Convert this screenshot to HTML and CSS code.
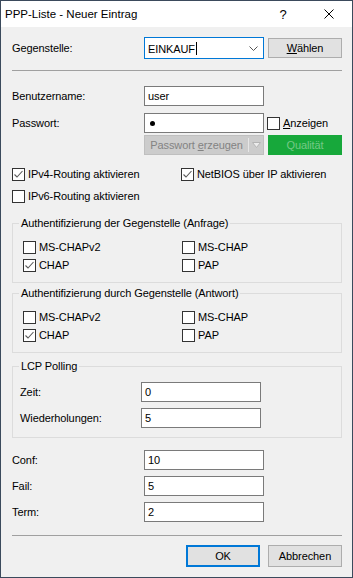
FILE: index.html
```html
<!DOCTYPE html>
<html lang="de">
    <head>
        <meta charset="UTF-8" />
        <meta name="viewport" content="width=device-width, initial-scale=1.0"/>
        <title>PPP-Liste - Neuer Eintrag</title>
        <link rel="stylesheet" href="styles.css">
    </head>
    <body>
        <div class="window">
            <div class="titlebar">
                <span class="title">PPP-Liste - Neuer Eintrag</span>
                <span class="tb-btn help">?</span>
                <span class="tb-btn">
                    <svg width="10" height="10" viewBox="0 0 10 10"><path d="M0.5 0.5 L9.5 9.5 M9.5 0.5 L0.5 9.5" stroke="#000" stroke-width="1" fill="none"/></svg>
                </span>
            </div>

            <div class="content">
                <div class="row r-remote">
                    <span class="lbl">Gegenstelle:</span>
                    <div class="combo">
                        <span class="combo-text">EINKAUF<span class="caret"></span></span>
                        <svg class="chev" width="9" height="5" viewBox="0 0 9 5"><polyline points="0.5,0.5 4.5,4.5 8.5,0.5" stroke="#555" stroke-width="1" fill="none"/></svg>
                    </div>
                    <button class="btn side"><u>W</u>ählen</button>
                </div>

                <div class="sep sep-top"></div>

                <div class="row r-user">
                    <span class="lbl">Benutzername:</span>
                    <div class="field">user</div>
                </div>
                <div class="row r-pass">
                    <span class="lbl">Passwort:</span>
                    <div class="field"><span class="dot"></span></div>
                    <label class="check side-check"><span class="cb"></span><span><u>A</u>nzeigen</span></label>
                </div>
                <div class="row r-gen">
                    <span class="lbl"></span>
                    <div class="split">
                        <span class="split-main">Passwort <u>e</u>rzeugen</span>
                        <span class="split-arrow">
                            <svg width="9" height="6" viewBox="0 0 9 6"><polygon points="0.5,0.5 8.5,0.5 4.5,5.5" fill="#ececec" stroke="#b4b4b4" stroke-width="1"/></svg>
                        </span>
                    </div>
                    <button class="btn quality">Qualität</button>
                </div>

                <div class="checks r-ipv4">
                    <label class="check"><span class="cb on"><svg width="11" height="11" viewBox="0 0 11 11"><polyline points="1.5,5.5 4,8 9.5,2" stroke="#5a5a5a" stroke-width="1.1" fill="none"/></svg></span><span>IPv4-Routing aktivieren</span></label>
                    <label class="check"><span class="cb on"><svg width="11" height="11" viewBox="0 0 11 11"><polyline points="1.5,5.5 4,8 9.5,2" stroke="#5a5a5a" stroke-width="1.1" fill="none"/></svg></span><span>NetBIOS über IP aktivieren</span></label>
                </div>
                <div class="checks r-ipv6">
                    <label class="check"><span class="cb"></span><span>IPv6-Routing aktivieren</span></label>
                </div>

                <fieldset class="group grp-first">
                    <legend>Authentifizierung der Gegenstelle (Anfrage)</legend>
                    <div class="gchecks">
                        <label class="check"><span class="cb"></span><span>MS-CHAPv2</span></label>
                        <label class="check"><span class="cb"></span><span>MS-CHAP</span></label>
                    </div>
                    <div class="gchecks second">
                        <label class="check"><span class="cb on"><svg width="11" height="11" viewBox="0 0 11 11"><polyline points="1.5,5.5 4,8 9.5,2" stroke="#5a5a5a" stroke-width="1.1" fill="none"/></svg></span><span>CHAP</span></label>
                        <label class="check"><span class="cb"></span><span>PAP</span></label>
                    </div>
                </fieldset>

                <fieldset class="group grp-answer">
                    <legend>Authentifizierung durch Gegenstelle (Antwort)</legend>
                    <div class="gchecks">
                        <label class="check"><span class="cb"></span><span>MS-CHAPv2</span></label>
                        <label class="check"><span class="cb"></span><span>MS-CHAP</span></label>
                    </div>
                    <div class="gchecks second">
                        <label class="check"><span class="cb on"><svg width="11" height="11" viewBox="0 0 11 11"><polyline points="1.5,5.5 4,8 9.5,2" stroke="#5a5a5a" stroke-width="1.1" fill="none"/></svg></span><span>CHAP</span></label>
                        <label class="check"><span class="cb"></span><span>PAP</span></label>
                    </div>
                </fieldset>

                <fieldset class="group grp-lcp">
                    <legend>LCP Polling</legend>
                    <div class="row g-time">
                        <span class="glbl">Zeit:</span>
                        <div class="field">0</div>
                    </div>
                    <div class="row g-repeat">
                        <span class="glbl">Wiederholungen:</span>
                        <div class="field">5</div>
                    </div>
                </fieldset>

                <div class="row r-conf">
                    <span class="lbl">Conf:</span>
                    <div class="field">10</div>
                </div>
                <div class="row r-next">
                    <span class="lbl">Fail:</span>
                    <div class="field">5</div>
                </div>
                <div class="row r-next">
                    <span class="lbl">Term:</span>
                    <div class="field">2</div>
                </div>

                <div class="sep sep-bottom"></div>

                <div class="actions">
                    <button class="btn default">OK</button>
                    <button class="btn">Abbrechen</button>
                </div>
            </div>
        </div>
    </body>
</html>
```

FILE: styles.css
```css
* {
    margin: 0;
    padding: 0;
    box-sizing: border-box;
}

body {
    background: #f0f0f0;
    font-family: "Liberation Sans", Arial, sans-serif;
    font-size: 11px;
    letter-spacing: -0.1px;
    color: #000;
}

.window {
    width: 353px;
    height: 578px;
    border: 1px solid #3b4a5c;
    background: #f0f0f0;
}

/* title bar */
.titlebar {
    height: 26px;
    background: #fff;
    display: flex;
    align-items: center;
}

.title {
    flex: 1;
    padding-left: 4px;
    font-size: 11.5px;
    letter-spacing: 0;
}

.tb-btn {
    width: 46px;
    height: 26px;
    display: flex;
    align-items: center;
    justify-content: center;
}

.help {
    font-size: 13px;
}

/* content */
.content {
    padding: 0 10px 0 11px;
}

.row {
    display: flex;
    align-items: center;
}

.lbl {
    width: 132px;
    flex: none;
}

.field {
    width: 120px;
    height: 20px;
    flex: none;
    border: 1px solid #7a7a7a;
    background: #fff;
    padding-left: 3px;
    display: flex;
    align-items: center;
}

.combo {
    width: 120px;
    height: 22px;
    flex: none;
    border: 1px solid #0078d7;
    background: #fff;
    padding: 0 5px 0 3px;
    display: flex;
    align-items: center;
    justify-content: space-between;
}

.caret {
    display: inline-block;
    width: 1px;
    height: 13px;
    background: #000;
    vertical-align: -2px;
    margin-left: 1px;
}

.dot {
    width: 5px;
    height: 5px;
    border-radius: 50%;
    background: #000;
    margin-left: 2px;
}

.btn {
    font-family: inherit;
    font-size: 11px;
    letter-spacing: -0.1px;
    color: #000;
    background: #e1e1e1;
    border: 1px solid #adadad;
    height: 22px;
    width: 74px;
}

.btn.side {
    height: 20px;
    margin-left: 4px;
}

.btn.quality {
    height: 20px;
    margin-left: 4px;
    background: #17a83b;
    border-color: #17a83b;
    color: #74c986;
}

.btn.default {
    border: 2px solid #0078d7;
}

.split {
    width: 120px;
    height: 20px;
    display: flex;
    background: #cccccc;
    border: 1px solid #bfbfbf;
    color: #838383;
}

.split-main {
    flex: 1;
    line-height: 18px;
    text-align: center;
    white-space: nowrap;
}

.split-arrow {
    width: 15px;
    border-left: 1px solid #e6e6e6;
    margin: 2px 0;
    display: flex;
    align-items: center;
    justify-content: center;
}

.sep {
    height: 1px;
    background: #a0a0a0;
}

/* checkboxes */
.check {
    display: flex;
    align-items: center;
    gap: 3px;
    height: 13px;
    line-height: 13px;
}

.cb {
    width: 13px;
    height: 13px;
    flex: none;
    border: 1px solid #333;
    background: #fff;
    display: flex;
    align-items: center;
    justify-content: center;
}

.side-check {
    margin-left: 3px;
}

.checks {
    display: grid;
    grid-template-columns: 169px 1fr;
}

/* group boxes */
.group {
    border: 1px solid #dcdcdc;
    margin: 0;
    padding: 0 8px 10px 6px;
}

.group legend {
    padding: 0 2px;
    line-height: 13px;
}

.gchecks {
    display: grid;
    grid-template-columns: 159px 1fr;
    padding-left: 4px;
    margin-top: 11px;
}

.gchecks.second {
    margin-top: 5px;
}

.glbl {
    width: 122px;
    flex: none;
    padding-left: 1px;
}

/* vertical rhythm */
.r-remote { margin-top: 10px; }
.sep-top { margin-top: 11px; }
.r-user { margin-top: 15px; }
.r-pass { margin-top: 7px; }
.r-gen { margin-top: 2px; }
.r-ipv4 { margin-top: 13px; }
.r-ipv6 { margin-top: 9px; }
.grp-first { margin-top: 14px; }
.grp-answer { margin-top: 4px; }
.grp-lcp { margin-top: 7px; padding-bottom: 9px; }
.g-time { margin-top: 9px; }
.g-repeat { margin-top: 6px; }
.r-conf { margin-top: 12px; }
.r-next { margin-top: 6px; }
.sep-bottom { margin-top: 13px; }

.actions {
    margin-top: 9px;
    display: flex;
    justify-content: flex-end;
    gap: 8px;
}
```
